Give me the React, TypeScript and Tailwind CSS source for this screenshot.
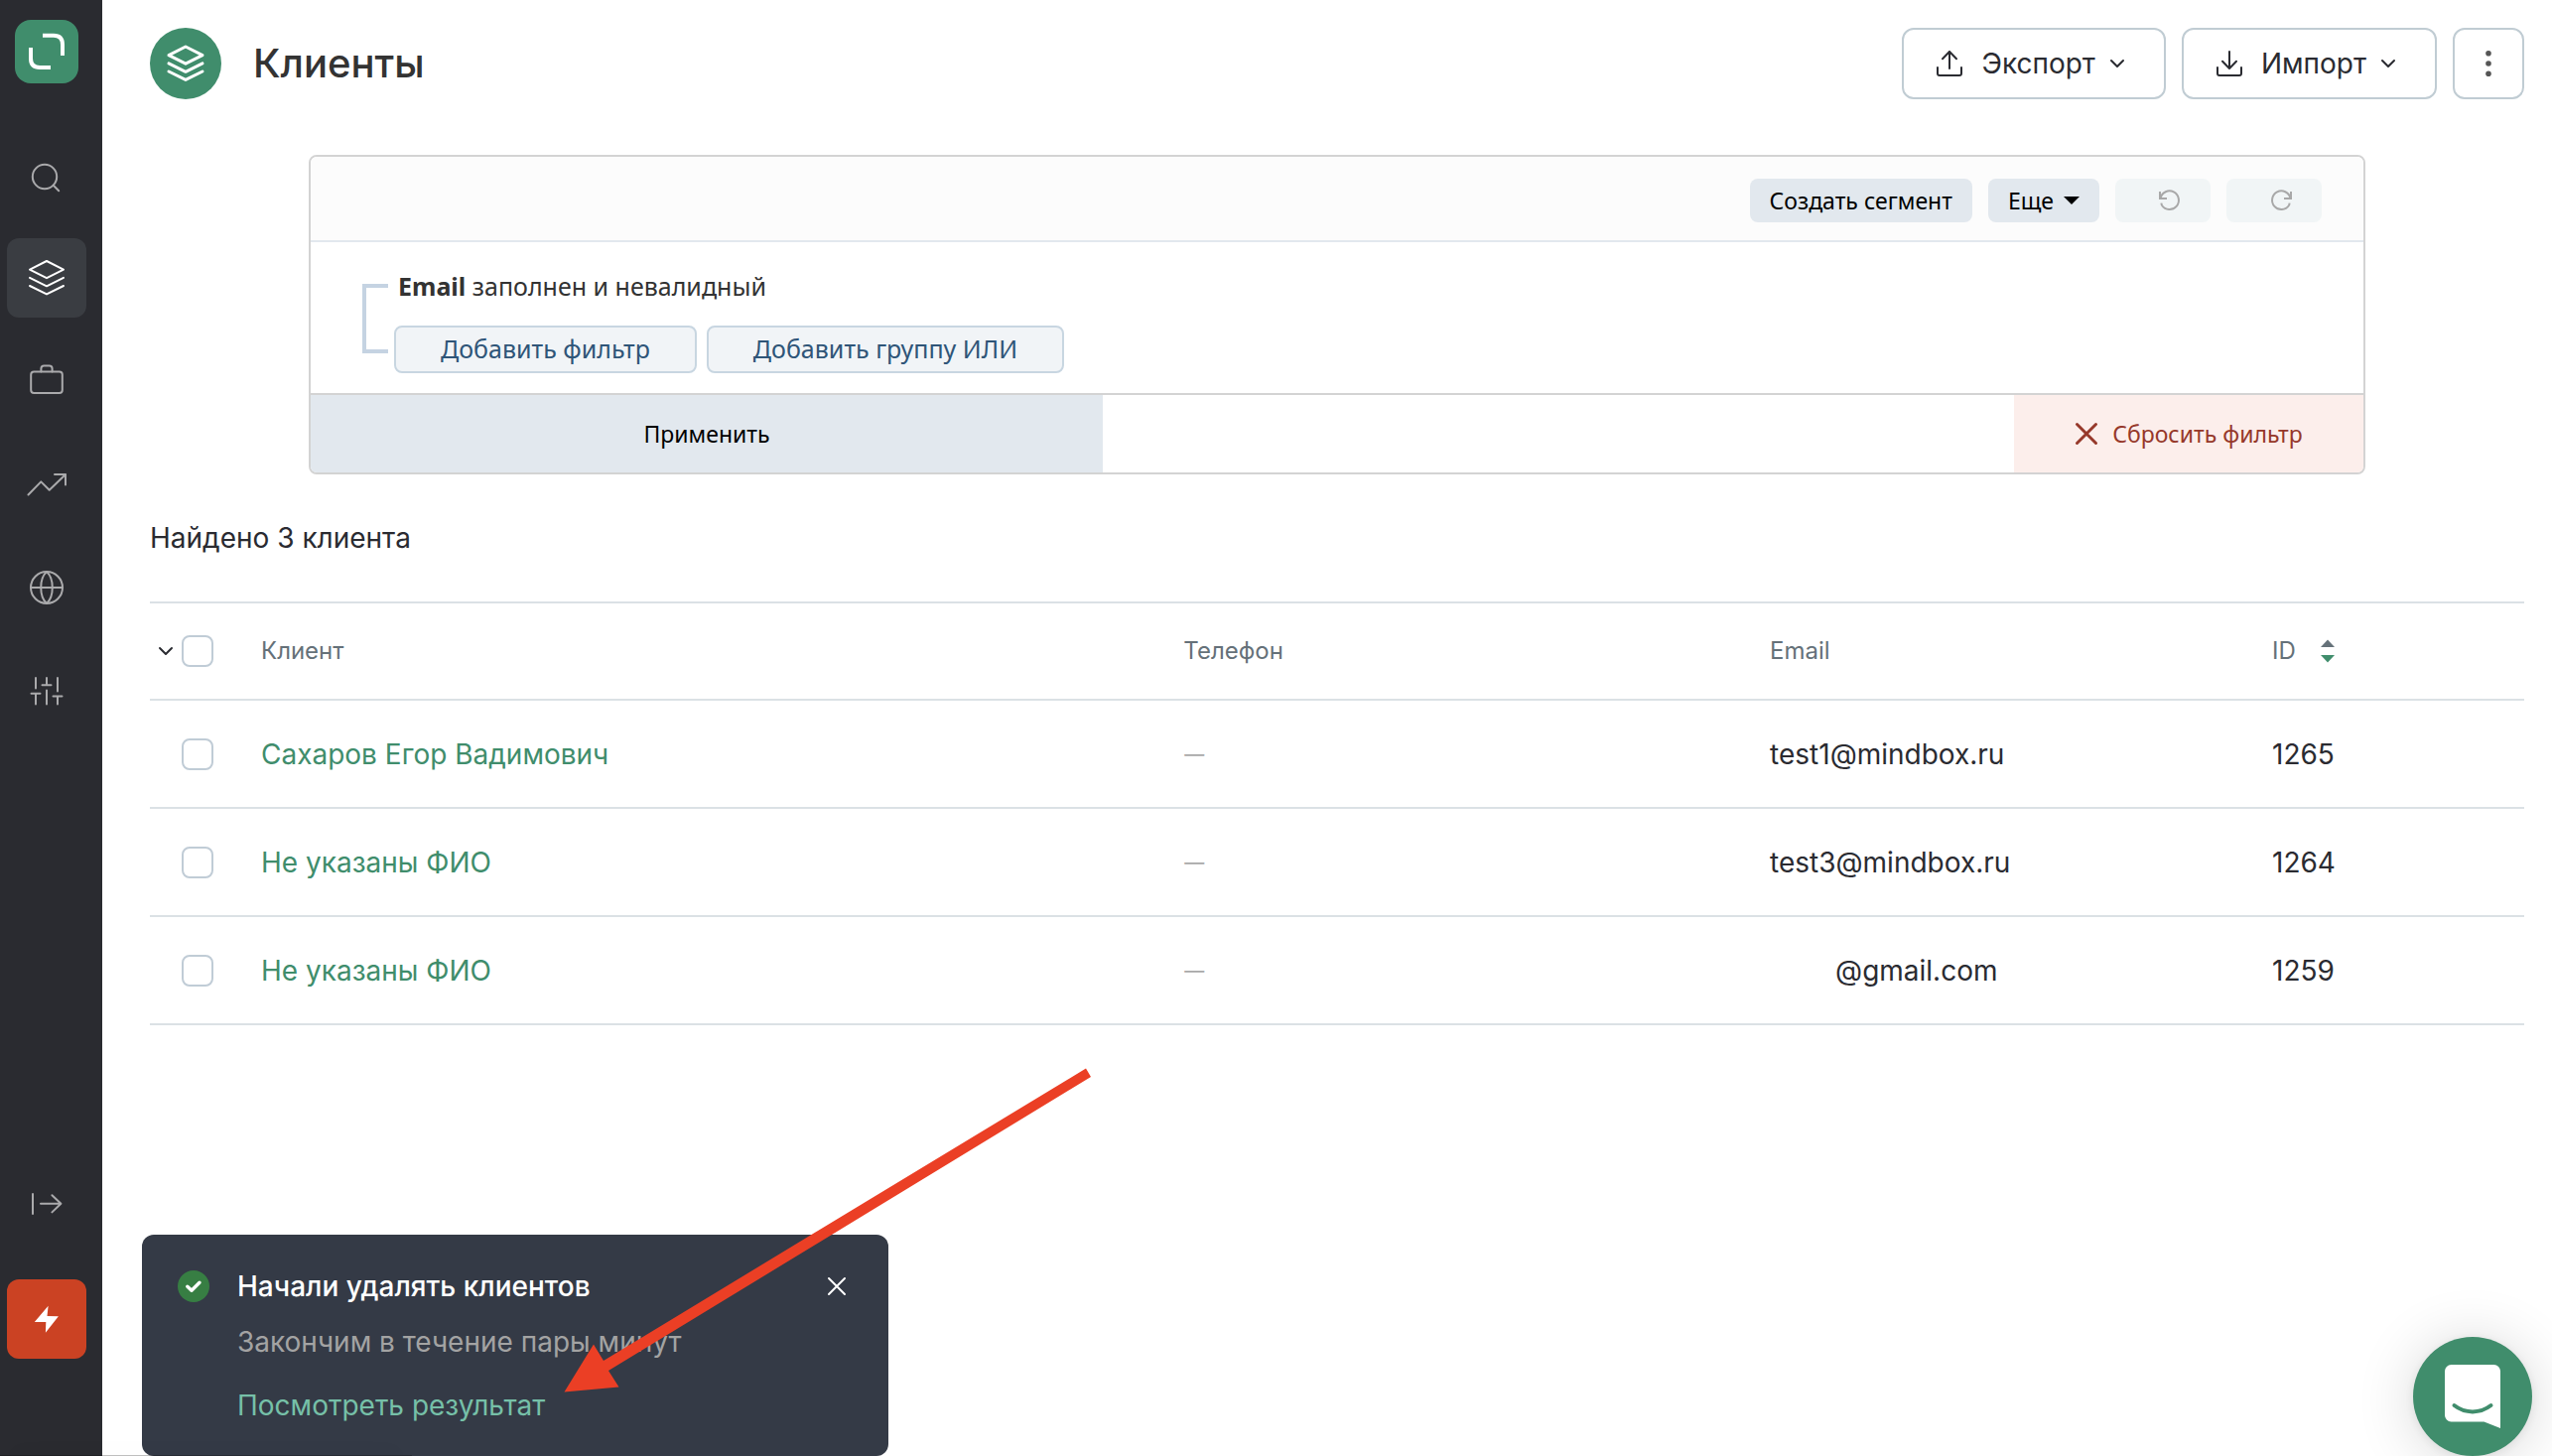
import type { ReactNode } from "react";
import { ChevronDown } from "lucide-react";

type IconProps = { className?: string; strokeWidth?: number };

function Icon({ className = "size-10", strokeWidth = 2, size = 40, children }: IconProps & { size?: number; children: ReactNode }) {
  return (
    <svg
      className={className}
      viewBox={`0 0 ${size} ${size}`}
      fill="none"
      stroke="currentColor"
      strokeWidth={strokeWidth}
      strokeLinecap="round"
      strokeLinejoin="round"
      aria-hidden="true"
    >
      {children}
    </svg>
  );
}

const LayersIcon = (props: IconProps) => (
  <Icon {...props}>
    <path d="M20 3 37 11.6 20 20.2 3 11.6Z" />
    <path d="M3 19.9 20 28.3 37 19.9" />
    <path d="M3 28 20 36.4 37 28" />
  </Icon>
);

const navItems = [
  {
    label: "Поиск",
    icon: (
      <Icon>
        <circle cx="18" cy="22" r="12.2" />
        <path d="M26.8 30.8 32.2 36.2" />
      </Icon>
    ),
  },
  { label: "Клиенты", icon: <LayersIcon />, active: true },
  {
    label: "Кампании",
    icon: (
      <Icon>
        <rect x="4.2" y="10.4" width="31.6" height="21.6" rx="3" />
        <path d="M14.4 10.4V7.4a3 3 0 0 1 3-3h5.2a3 3 0 0 1 3 3v3" />
      </Icon>
    ),
  },
  {
    label: "Аналитика",
    icon: (
      <Icon>
        <path d="M1.5 30.5 14.3 17.4 22.7 25.8 38.8 10.2" />
        <path d="M28 10H39V20.6" />
      </Icon>
    ),
  },
  {
    label: "Интеграции",
    icon: (
      <Icon>
        <circle cx="20" cy="20" r="16" />
        <path d="M4 20H36M20 4C12.3 11 12.3 29 20 36M20 4C27.7 11 27.7 29 20 36" />
      </Icon>
    ),
  },
  {
    label: "Настройки",
    icon: (
      <Icon>
        <path d="M9 7V17.5M4.5 22.8H13.5M9 22.8V33.5M20 7V14.2M15.5 14.2H24.5M20 19.6V33.5M31 7V20.4M26.5 25.6H35.5M31 25.6V33.5" />
      </Icon>
    ),
  },
];

function Sidebar() {
  return (
    <aside className="sticky top-0 flex h-screen w-[103px] shrink-0 flex-col items-center bg-[#2a2b30] pt-5 pr-[9px] pb-[98px]">
      <a href="#home" aria-label="Mindbox" className="flex size-16 items-center justify-center rounded-2xl bg-[#408d6c] text-white">
        <svg className="size-16" viewBox="0 0 64 64" fill="none" stroke="currentColor" strokeWidth="4" aria-hidden="true">
          <path d="M28 15.8H39Q48 15.8 48 25V36" />
          <path d="M16 28V39Q16 48 25 48H36" />
        </svg>
      </a>
      <nav className="mt-[52px] flex flex-col gap-6">
        {navItems.map((item) => (
          <button
            key={item.label}
            type="button"
            aria-label={item.label}
            className={
              item.active
                ? "flex size-20 items-center justify-center rounded-xl bg-[#3a3d42] text-white"
                : "flex size-20 items-center justify-center rounded-xl text-[#aaaaac]"
            }
          >
            {item.icon}
          </button>
        ))}
      </nav>
      <div className="mt-auto flex flex-col gap-9">
        <button type="button" aria-label="Развернуть меню" className="flex size-20 items-center justify-center text-[#aaaaac]">
          <Icon>
            <path d="M6 10V30M14 19.8H34M25.4 11.2 34.4 19.8 25.4 28.4" />
          </Icon>
        </button>
        <button type="button" aria-label="Быстрые действия" className="flex size-20 items-center justify-center rounded-xl bg-[#cb4223] text-white">
          <svg className="size-10" viewBox="0 0 40 40" fill="currentColor" aria-hidden="true">
            <path d="M21.6 6.7 7.8 23H19.3L18.9 33.7 31.9 17.3 20.5 16.9Z" />
          </svg>
        </button>
      </div>
    </aside>
  );
}

function HeaderButton({ icon, label }: { icon: ReactNode; label: string }) {
  return (
    <button type="button" className="flex h-[72px] items-center rounded-xl border-2 border-[#c0ccd3] pr-[35px] pl-[30px] text-[28px] text-[#2a2b31]">
      {icon}
      <span className="ml-4">{label}</span>
      <ChevronDown className="ml-2.5 size-6" strokeWidth={2} aria-hidden="true" />
    </button>
  );
}

function PageHeader() {
  return (
    <header className="flex items-center gap-4">
      <div className="flex size-[72px] items-center justify-center rounded-full bg-[#408d6c] text-white">
        <LayersIcon strokeWidth={3} />
      </div>
      <h1 className="mr-auto ml-4 text-[40px] leading-[48px] font-medium text-[#333333]">Клиенты</h1>
      <HeaderButton
        label="Экспорт"
        icon={
          <Icon className="size-8" size={32}>
            <path d="M4 20v6a2 2 0 0 0 2 2h20a2 2 0 0 0 2-2v-6M16 21V4M9 11.2 16 4l7 7.2" />
          </Icon>
        }
      />
      <HeaderButton
        label="Импорт"
        icon={
          <Icon className="size-8" size={32}>
            <path d="M4 20v6a2 2 0 0 0 2 2h20a2 2 0 0 0 2-2v-6M16 4v17M9 13.8 16 21l7-7.2" />
          </Icon>
        }
      />
      <button type="button" aria-label="Ещё" className="flex size-[72px] items-center justify-center rounded-xl border-2 border-[#c0ccd3] text-[#555555]">
        <svg className="size-8" viewBox="0 0 32 32" fill="currentColor" aria-hidden="true">
          <circle cx="16" cy="5.8" r="2.8" />
          <circle cx="16" cy="16" r="2.8" />
          <circle cx="16" cy="26.2" r="2.8" />
        </svg>
      </button>
    </header>
  );
}

function FilterPanel() {
  return (
    <section
      aria-label="Фильтр"
      className="mx-40 mt-14 overflow-hidden rounded-lg border-2 border-[#d3d3d3] font-['Noto_Sans',sans-serif] text-[23px] text-black"
    >
      <div className="flex h-[86px] items-center justify-end gap-4 border-b-2 border-[#e2e8ee] bg-[#fcfcfc] pt-1 pr-[42px]">
        <button type="button" className="h-11 rounded-lg bg-[#e2e8ee] px-5">
          Создать сегмент
        </button>
        <button type="button" className="flex h-11 items-center gap-2.5 rounded-lg bg-[#e2e8ee] px-5">
          Еще
          <svg className="h-2 w-4" viewBox="0 0 16 8" fill="currentColor" aria-hidden="true">
            <path d="M0 0H16L8 8Z" />
          </svg>
        </button>
        <button type="button" disabled aria-label="Отменить" className="flex h-11 w-24 items-center justify-center rounded-lg bg-[#f1f5f6] pl-[14px] text-[#a8a8a8]">
          <svg className="size-6" viewBox="0 0 24 24" fill="none" stroke="currentColor" strokeWidth="2" aria-hidden="true">
            <path d="M2 3V10H9" />
            <path d="M2.6 9.6A9.3 9.3 0 1 1 4 17M4 17A9.3 9.3 0 0 1 3.4 14.6" />
          </svg>
        </button>
        <button type="button" disabled aria-label="Повторить" className="flex h-11 w-24 items-center justify-center rounded-lg bg-[#f1f5f6] pl-[14px] text-[#a8a8a8]">
          <svg className="size-6" viewBox="0 0 24 24" fill="none" stroke="currentColor" strokeWidth="2" aria-hidden="true">
            <path d="M22 3V10H15" />
            <path d="M21.4 9.6A9.3 9.3 0 1 0 20 17M20 17A9.3 9.3 0 0 0 20.6 14.6" />
          </svg>
        </button>
      </div>

      <div className="flex pt-7 pb-5 pl-[52px] text-[25px]">
        <div className="mt-[14px] h-[70px] w-[26px] border-4 border-r-0 border-[#c5d3e2]" />
        <div className="ml-1.5 flex flex-col gap-6">
          <p className="pl-1 leading-8 text-[#333333]">
            <b>Email</b> заполнен и невалидный
          </p>
          <div className="flex gap-2.5 text-[#2f5578]">
            <button type="button" className="h-12 rounded-lg border-2 border-[#c8d6e1] bg-[#f1f4f7] px-[45px]">
              Добавить фильтр
            </button>
            <button type="button" className="h-12 rounded-lg border-2 border-[#c8d6e1] bg-[#f1f4f7] px-[45px]">
              Добавить группу ИЛИ
            </button>
          </div>
        </div>
      </div>

      <div className="flex h-20 justify-between border-t-2 border-[#d3d3d3]">
        <button type="button" className="w-[798px] bg-[#e2e8ee]">
          Применить
        </button>
        <button type="button" className="flex w-[352px] items-center justify-center gap-3.5 bg-[#fceeeb] text-[#96382a]">
          <svg className="size-6" viewBox="0 0 24 24" fill="none" stroke="currentColor" strokeWidth="3" strokeLinecap="round" aria-hidden="true">
            <path d="M2.5 2.5 21.5 21.5M21.5 2.5 2.5 21.5" />
          </svg>
          Сбросить фильтр
        </button>
      </div>
    </section>
  );
}

const clients = [
  { id: "1265", name: "Сахаров Егор Вадимович", email: "test1@mindbox.ru" },
  { id: "1264", name: "Не указаны ФИО", email: "test3@mindbox.ru" },
  { id: "1259", name: "Не указаны ФИО", email: "@gmail.com", masked: true },
];

function Checkbox({ label }: { label: string }) {
  return (
    <input
      type="checkbox"
      aria-label={label}
      className="block size-8 appearance-none rounded-lg border-2 border-[#c0ccd6] bg-white checked:bg-[#408d6c]"
    />
  );
}

function ClientsTable() {
  return (
    <table className="mt-11 w-full table-fixed border-separate border-spacing-0 text-left text-[28px] leading-10 text-[#2a2b31]">
      <thead>
        <tr className="text-2xl text-[#657179] *:h-[100px] *:border-y-2 *:border-[#dbe1e5] *:p-0 *:font-normal">
          <th className="w-28">
            <div className="flex items-center gap-1 pl-1">
              <button type="button" aria-label="Выбор клиентов" className="text-[#2a2b31]">
                <ChevronDown className="size-6" strokeWidth={2} aria-hidden="true" />
              </button>
              <Checkbox label="Выбрать всех" />
            </div>
          </th>
          <th className="w-[38.85%]">Клиент</th>
          <th className="w-[24.7%]">Телефон</th>
          <th className="w-[21.15%]">Email</th>
          <th aria-sort="descending">
            <button type="button" className="flex items-center gap-6">
              ID
              <svg className="h-6 w-4" viewBox="0 0 16 24" aria-hidden="true">
                <path d="M8 0.5 15 8H1Z" fill="#657179" />
                <path d="M8 23.5 1 16H15Z" fill="#408d6c" />
              </svg>
            </button>
          </th>
        </tr>
      </thead>
      <tbody>
        {clients.map((client) => (
          <tr key={client.id} className="*:h-[109px] *:border-b-2 *:border-[#dbe1e5] *:p-0">
            <td>
              <div className="pl-8">
                <Checkbox label={`Выбрать ${client.name}, ${client.id}`} />
              </div>
            </td>
            <td>
              <a href={`#client-${client.id}`} className="text-[#408d6c]">
                {client.name}
              </a>
            </td>
            <td className="text-xl text-[#a8a8a8]">
              <span className="pl-px">—</span>
            </td>
            <td>
              <span className={client.masked ? "pl-[66px]" : ""}>{client.email}</span>
            </td>
            <td>{client.id}</td>
          </tr>
        ))}
      </tbody>
    </table>
  );
}

function Toast() {
  return (
    <div role="status" className="fixed bottom-0 left-[143px] flex w-[752px] items-start rounded-xl bg-[#343a46] px-9 pt-9 pb-[35px] text-[28px]">
      <svg className="size-8" viewBox="0 0 32 32" fill="none" aria-hidden="true">
        <circle cx="16" cy="16" r="16" fill="#377e43" />
        <path d="M9.8 16.2 14 20.2 22 12.2" stroke="white" strokeWidth="3.4" strokeLinecap="round" strokeLinejoin="round" />
      </svg>
      <div className="ml-7 flex-1">
        <p className="leading-8 font-medium text-white">Начали удалять клиентов</p>
        <p className="mt-6 leading-8 text-[#a3a3a3]">Закончим в течение пары минут</p>
        <a href="#result" className="mt-8 block leading-8 text-[#76c0a8]">
          Посмотреть результат
        </a>
      </div>
      <button type="button" aria-label="Закрыть" className="flex size-8 items-center justify-center text-white">
        <svg className="size-5" viewBox="0 0 20 20" fill="none" stroke="currentColor" strokeWidth="2" strokeLinecap="round" aria-hidden="true">
          <path d="M2 2 18 18M18 2 2 18" />
        </svg>
      </button>
    </div>
  );
}

function PointerArrow() {
  return (
    <svg className="pointer-events-none absolute top-[1076px] left-[568px] h-[327px] w-[532px]" viewBox="0 0 532 327" fill="#eb3f25" aria-hidden="true">
      <path d="M0.5 326.5 30 278.5 40 295 526 0.5 531 9 45 305 55.5 321.5Z" />
    </svg>
  );
}

function ChatButton() {
  return (
    <button
      type="button"
      aria-label="Открыть чат"
      className="fixed right-5 bottom-0 size-[120px] rounded-full bg-[#408d6c] shadow-[0_4px_60px_rgba(0,0,0,0.16),0_2px_12px_rgba(0,0,0,0.08)]"
    >
      <svg className="size-full" viewBox="0 0 120 120" aria-hidden="true">
        <path d="M38.5 28H81.5A6.5 6.5 0 0 1 88 34.5V92L71.5 85.5H38.5A6.5 6.5 0 0 1 32 79V34.5A6.5 6.5 0 0 1 38.5 28Z" fill="white" />
        <path d="M41.5 69C52.5 77.5 67.5 77.5 78.5 69" fill="none" stroke="#408d6c" strokeWidth="4" strokeLinecap="round" />
      </svg>
    </button>
  );
}

export default function App() {
  return (
    <div className="relative flex min-h-screen bg-white font-['Inter',sans-serif]">
      <Sidebar />
      <main className="min-w-0 flex-1 pt-7 pr-7 pl-12">
        <PageHeader />
        <FilterPanel />
        <p className="mt-11 text-[28px] leading-10 text-[#2a2b31]">Найдено 3 клиента</p>
        <ClientsTable />
      </main>
      <Toast />
      <div className="pointer-events-none fixed bottom-0 left-0 h-px w-[415px] bg-black/25 shadow-[0_0_32px_rgba(0,0,0,0.2)]" />
      <PointerArrow />
      <ChatButton />
    </div>
  );
}
